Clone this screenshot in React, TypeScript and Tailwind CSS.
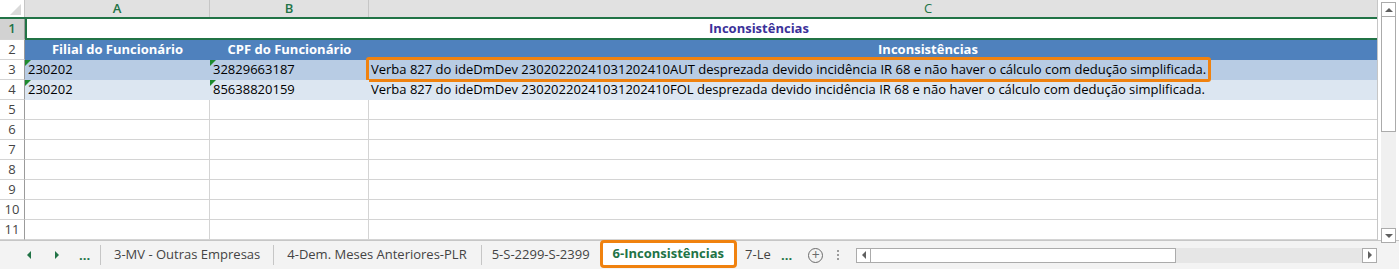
import React from "react";

const F = "font-['Open_Sans',sans-serif]";

function Tri() {
  return <span className="absolute left-0 top-0 w-0 h-0 border-t-[6px] border-t-[#1e8a2e] border-r-[6px] border-r-transparent" />;
}

function RowHead({ n, sel }: { n: number; sel?: boolean }) {
  return (
    <div
      className={`w-[25px] shrink-0 flex items-center justify-center border-r border-r-[#9b9b9b] border-b border-b-[#d4d4d4] text-[13px] ${
        sel ? "bg-[#d2d2d2] text-[#217346] font-semibold" : "bg-white text-[#444]"
      }`}
    >
      {n}
    </div>
  );
}

const msg1 =
  "Verba 827 do ideDmDev 23020220241031202410AUT desprezada devido incidência IR 68 e não haver o cálculo com dedução simplificada.";
const msg2 =
  "Verba 827 do ideDmDev 23020220241031202410FOL desprezada devido incidência IR 68 e não haver o cálculo com dedução simplificada.";

export default function App() {
  const empty = [5, 6, 7, 8, 9, 10, 11];
  return (
    <div className={`w-[1399px] h-[269px] bg-white flex flex-col overflow-hidden ${F}`}>
      <div className="flex h-[240px]">
        <div className="w-[1378px] overflow-hidden border-r border-r-[#c6c6c6]">
          <div className="w-[1600px] flex flex-col">
            {/* column header */}
            <div className="flex h-[19px] border-b-2 border-b-[#217346]">
              <div className="w-[25px] shrink-0 bg-white relative border-r border-r-[#c6c6c6]">
                <span className="absolute right-[3px] bottom-[2px] w-0 h-0 border-b-[11px] border-b-[#dadada] border-l-[11px] border-l-transparent" />
              </div>
              <div className="w-[185px] shrink-0 bg-[#e1e1e1] border-r border-r-[#c6c6c6] flex items-center justify-center text-[13px] font-semibold text-[#217346]">A</div>
              <div className="w-[159px] shrink-0 bg-[#e1e1e1] border-r border-r-[#c6c6c6] flex items-center justify-center text-[13px] font-semibold text-[#217346]">B</div>
              <div className="w-[1118px] shrink-0 bg-[#e1e1e1] flex items-center justify-center text-[13px] text-[#217346]">C</div>
            </div>
            {/* row 1 */}
            <div className="flex h-[21px]">
              <div className="w-[25px] shrink-0 flex items-center justify-center border-r border-r-[#9b9b9b] bg-[#d2d2d2] text-[13px] font-semibold text-[#217346] border-b border-b-[#d4d4d4]">1</div>
              <div className="w-[1462px] shrink-0 border-2 border-t-0 border-[#217346] flex items-center justify-center pl-[6px] text-[13px] font-bold text-[#3b3199]">
                Inconsistências
              </div>
            </div>
            {/* row 2 */}
            <div className="flex h-[20px]">
              <RowHead n={2} />
              <div className="w-[185px] shrink-0 bg-[#4f81bd] flex items-center justify-center text-[13px] font-bold text-white">Filial do Funcionário</div>
              <div className="w-[159px] shrink-0 bg-[#4f81bd] flex items-center justify-center text-[13px] font-bold text-white">CPF do Funcionário</div>
              <div className="w-[1118px] shrink-0 bg-[#4f81bd] flex items-center justify-center text-[13px] font-bold text-white">Inconsistências</div>
            </div>
            {/* row 3 */}
            <div className="flex h-[20px]">
              <RowHead n={3} />
              <div className="w-[185px] shrink-0 bg-[#b8cce4] relative flex items-center pl-[3px] text-[13px] text-black"><Tri />230202</div>
              <div className="w-[159px] shrink-0 bg-[#b8cce4] relative flex items-center pl-[3px] text-[13px] text-black"><Tri />32829663187</div>
              <div className="w-[1118px] shrink-0 bg-[#b8cce4] relative flex items-center pl-[2px] text-[13px] text-black">
                <span className="relative">
                  {msg1}
                  <span className="absolute -left-[5px] -right-[5px] -top-[3px] -bottom-[2px] border-[3px] border-[#f0820f] rounded-[3px]" />
                </span>
              </div>
            </div>
            {/* row 4 */}
            <div className="flex h-[20px]">
              <RowHead n={4} />
              <div className="w-[185px] shrink-0 bg-[#dce6f1] relative flex items-center pl-[3px] text-[13px] text-black"><Tri />230202</div>
              <div className="w-[159px] shrink-0 bg-[#dce6f1] relative flex items-center pl-[3px] text-[13px] text-black"><Tri />85638820159</div>
              <div className="w-[1118px] shrink-0 bg-[#dce6f1] flex items-center pl-[2px] text-[13px] text-black">{msg2}</div>
            </div>
            {empty.map((n) => (
              <div key={n} className="flex h-[20px]">
                <RowHead n={n} />
                <div className="w-[185px] shrink-0 border-r border-b border-[#d4d4d4]" />
                <div className="w-[159px] shrink-0 border-r border-b border-[#d4d4d4]" />
                <div className="w-[1118px] shrink-0 border-b border-[#d4d4d4]" />
              </div>
            ))}
          </div>
        </div>
        {/* vertical scrollbar */}
        <div className="w-[21px] flex flex-col pl-[3px] pr-[3px] pt-[2px] bg-white">
          <div className="h-[15px] border border-[#ababab] flex items-center justify-center">
            <span className="w-0 h-0 border-l-[4px] border-l-transparent border-r-[4px] border-r-transparent border-b-[4px] border-b-[#606060]" />
          </div>
          <div className="h-[115px] border border-t-0 border-[#ababab] bg-white" />
          <div className="flex-1 bg-[#f0f0f0]" />
        </div>
      </div>
      {/* tab bar */}
      <div className="h-[29px] bg-[#f3f3f3] border-t border-t-[#c6c6c6] flex items-center text-[13px] text-[#444] relative">
        <div className="absolute right-[3px] -top-[13px] w-[15px] h-[15px] border border-[#ababab] bg-white flex items-center justify-center">
          <span className="w-0 h-0 border-l-[4px] border-l-transparent border-r-[4px] border-r-transparent border-t-[4px] border-t-[#606060]" />
        </div>
        <div className="w-[100px] flex items-center h-full">
          <span className="ml-[27px] w-0 h-0 border-t-[4px] border-t-transparent border-b-[4px] border-b-transparent border-r-[4px] border-r-[#217346]" />
          <span className="ml-[24px] w-0 h-0 border-t-[4px] border-t-transparent border-b-[4px] border-b-transparent border-l-[4px] border-l-[#217346]" />
          <span className="ml-[20px] text-[#217346] font-bold leading-none">...</span>
        </div>
        <div className="h-[20px] w-px bg-[#c6c6c6]" />
        <div className="pl-[13px] pr-[13px]">3-MV - Outras Empresas</div>
        <div className="h-[20px] w-px bg-[#c6c6c6]" />
        <div className="pl-[13px] pr-[14px]">4-Dem. Meses Anteriores-PLR</div>
        <div className="h-[20px] w-px bg-[#c6c6c6]" />
        <div className="pl-[10px] pr-[10px]">5-S-2299-S-2399</div>
        <div className="h-[28px] -mt-[2px] border-[3px] border-[#f0820f] rounded-[4px] bg-white flex items-center pl-[10px] pr-[10px] font-bold text-[#217346]">
          6-Inconsistências
        </div>
        <div className="ml-[8px] w-[27px] overflow-hidden whitespace-nowrap">7-Le</div>
        <span className="ml-[9px] text-[#217346] font-bold leading-none">...</span>
        <div className="ml-[16px] w-[15px] h-[15px] rounded-full border border-[#6b6b6b] flex items-center justify-center text-[#6b6b6b] text-[14px] leading-none">+</div>
        <div className="ml-[14px] flex flex-col gap-[2px]">
          <span className="w-[2px] h-[2px] bg-[#9b9b9b]" />
          <span className="w-[2px] h-[2px] bg-[#9b9b9b]" />
          <span className="w-[2px] h-[2px] bg-[#9b9b9b]" />
        </div>
        <div className="ml-[17px] h-[15px] w-[521px] flex">
          <div className="w-[15px] h-full border border-[#ababab] bg-white flex items-center justify-center">
            <span className="w-0 h-0 border-t-[4px] border-t-transparent border-b-[4px] border-b-transparent border-r-[4px] border-r-[#606060]" />
          </div>
          <div className="w-[305px] h-full border border-l-0 border-[#ababab] bg-white" />
          <div className="flex-1 h-full bg-[#e6e6e6]" />
          <div className="w-[15px] h-full border border-[#ababab] bg-white flex items-center justify-center">
            <span className="w-0 h-0 border-t-[4px] border-t-transparent border-b-[4px] border-b-transparent border-l-[4px] border-l-[#606060]" />
          </div>
        </div>
      </div>
    </div>
  );
}
